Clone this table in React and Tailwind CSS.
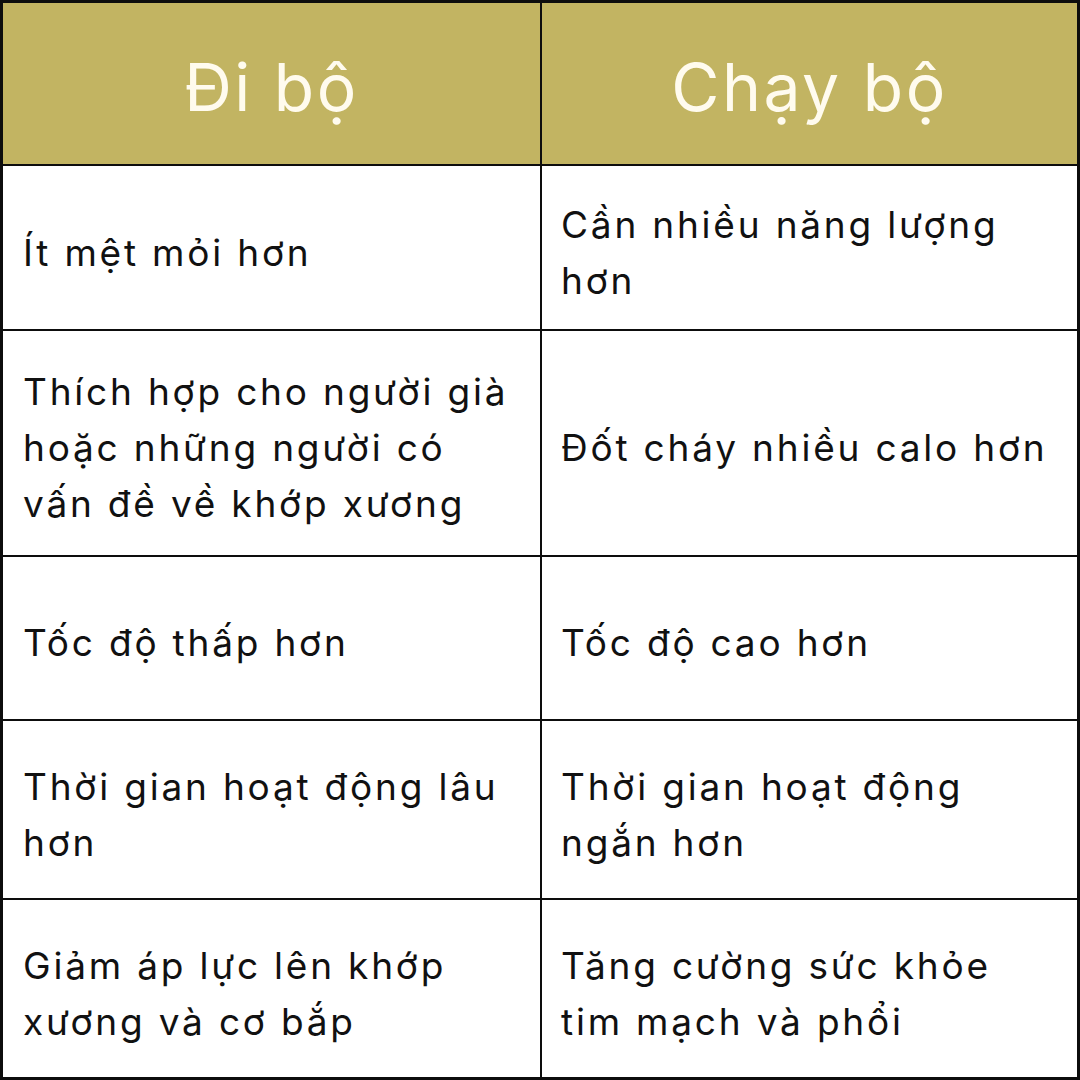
import React from "react";

const rows = [
  ["Ít mệt mỏi hơn", "Cần nhiều năng lượng hơn"],
  ["Thích hợp cho người già hoặc những người có vấn đề về khớp xương", "Đốt cháy nhiều calo hơn"],
  ["Tốc độ thấp hơn", "Tốc độ cao hơn"],
  ["Thời gian hoạt động lâu hơn", "Thời gian hoạt động ngắn hơn"],
  ["Giảm áp lực lên khớp xương và cơ bắp", "Tăng cường sức khỏe tim mạch và phổi"],
];

export default function App() {
  return (
    <div
      className="w-[1080px] h-[1080px] bg-[#0d0d0d] p-[3px] grid grid-cols-[537px_535px] grid-rows-[161px_163px_224px_162px_177px_177px] gap-[2px]"
      style={{ fontFamily: "Inter, 'Noto Sans', sans-serif" }}
    >
      <div className="bg-[#c2b462] flex items-center justify-center pt-[8px] text-[66px] text-[#fffbee] font-normal tracking-[2.5px]">Đi bộ</div>
      <div className="bg-[#c2b462] flex items-center justify-center pt-[8px] text-[66px] text-[#fffbee] font-normal tracking-[2.5px]">Chạy bộ</div>
      {rows.map((r, i) => (
        <React.Fragment key={i}>
          <div className="bg-white flex items-center pl-[20px] pr-[14px] pt-[10px] text-[37px] leading-[56px] tracking-[2.8px] text-[#111]">{r[0]}</div>
          <div className="bg-white flex items-center pl-[19px] pr-[14px] pt-[10px] text-[37px] leading-[56px] tracking-[2.8px] text-[#111]">{r[1]}</div>
        </React.Fragment>
      ))}
    </div>
  );
}
